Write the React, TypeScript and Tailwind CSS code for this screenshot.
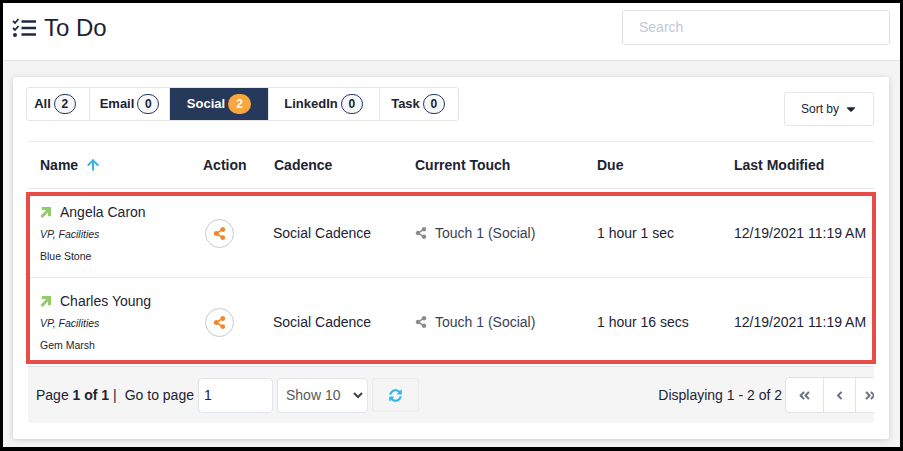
import { FaShareAlt, FaSyncAlt, FaAngleDoubleLeft, FaAngleDoubleRight, FaAngleLeft, FaCaretDown } from "react-icons/fa";
import { FiArrowUp } from "react-icons/fi";

const tabs = [
  { label: "All", count: 2 },
  { label: "Email", count: 0 },
  { label: "Social", count: 2, active: true },
  { label: "LinkedIn", count: 0 },
  { label: "Task", count: 0 },
];

const tabWidths: Record<string, string> = {
  All: "w-[63px] pr-[6px]",
  Email: "w-[80px]",
  Social: "w-[99px]",
  LinkedIn: "w-[111px] pr-[1px]",
  Task: "w-[78px] pr-[2px]",
};

const rows = [
  { name: "Angela Caron", company: "Blue Stone", due: "1 hour 1 sec" },
  { name: "Charles Young", company: "Gem Marsh", due: "1 hour 16 secs" },
];

const columns = "grid grid-cols-[175px_71px_141px_182px_137px_1fr]";

function TodoIcon() {
  return (
    <svg width="24" height="20" viewBox="0 0 24 20" className="text-[#1c2a45]">
      <path d="M1 3l2 2 3.5-4M1 10l2 2 3.5-4" fill="none" stroke="currentColor" strokeWidth="1.8" />
      <circle cx="3" cy="17" r="2" fill="currentColor" />
      <path d="M9.500 3.500h14.500M9.500 10h14.500M9.500 16.500h14.500" stroke="currentColor" strokeWidth="2.400" />
    </svg>
  );
}

function TrendArrow() {
  return (
    <svg width="11" height="11" viewBox="0 0 11 11" className="shrink-0">
      <path d="M1.500 10L8.500 2.800M1.800 1.500h7.700v7.700" fill="none" stroke="#93cc70" strokeWidth="3" />
    </svg>
  );
}

export default function App() {
  return (
    <div className="h-[451px] w-[903px] overflow-hidden border-t-[3px] border-r-[3px] border-b-[4px] border-l-[3px] border-black bg-[#f4f4f4] font-['Liberation_Sans',Arial,sans-serif] text-[14px] text-[#1c2333]">
      <header className="flex h-[58px] items-center justify-between border-b border-[#e3e3e3] bg-white pr-[10px] pl-[9px]">
        <div className="-mt-[8px] flex items-center gap-[8px]">
          <TodoIcon />
          <h1 className="text-[24px] leading-none font-normal">To Do</h1>
        </div>
        <div className="-mt-[8px] flex h-[35px] w-[268px] items-center rounded-[3px] border border-[#e2e2e2] px-[16px] text-[14px] text-[#c3c8d6]">
          Search
        </div>
      </header>

      <main className="mx-[10px] mt-[16px] h-[362px] w-[876px] rounded-[3px] bg-white pt-[10px] pl-[13px] shadow-[0_1px_6px_rgba(0,0,0,0.16)]">
        <div className="flex items-start justify-between pr-[15px]">
          <div className="flex h-[34px] rounded-[3px] border border-[#e6e6e6]">
            {tabs.map((t) => (
              <div
                key={t.label}
                className={`flex items-center justify-center gap-[3px] border-r border-[#e6e6e6] text-[13px] font-bold last:border-r-0 ${tabWidths[t.label]} ${t.active ? "bg-[#27395a] text-white" : ""}`}
              >
                <span>{t.label}</span>
                <span
                  className={`flex h-[20px] items-center justify-center rounded-full text-[12px] ${t.active ? "w-[23px] bg-[#f9a63f] text-white" : "w-[22px] border border-[#27395a] bg-[#f6f7fa]"}`}
                >
                  {t.count}
                </span>
              </div>
            ))}
          </div>
          <div className="mt-[5px] flex h-[34px] w-[90px] items-center justify-center gap-[5px] rounded-[3px] border border-[#e6e6e6] pl-[1px] text-[12px]">
            Sort by
            <FaCaretDown className="text-[14px]" />
          </div>
        </div>

        <div className="mt-[15px] mr-[15px] ml-[2px] border-t border-[#ececec]">
          <div className={`${columns} h-[47px] items-center border-b border-[#e6e6e6] font-bold`}>
            <div className="flex items-center gap-[7px] pl-[12px]">
              Name
              <FiArrowUp className="text-[16px] text-[#35b5e6]" strokeWidth={3} />
            </div>
            <div>Action</div>
            <div>Cadence</div>
            <div>Current Touch</div>
            <div>Due</div>
            <div>Last Modified</div>
          </div>

          <div className="relative">
            {rows.map((r, i) => (
              <div
                key={r.name}
                className={`${columns} items-center ${i === 0 ? "h-[89px] border-b border-[#ececec]" : "h-[88px]"}`}
              >
                <div className="pt-[2px] pl-[12px]">
                  <div className="flex h-[22px] items-center gap-[9px]">
                    <TrendArrow />
                    <span>{r.name}</span>
                  </div>
                  <div className="h-[22px] text-[10.500px] leading-[22px] italic">VP, Facilities</div>
                  <div className="h-[22px] text-[10.500px] leading-[22px]">{r.company}</div>
                </div>
                <div>
                  <div className="ml-[2px] flex h-[29px] w-[29px] items-center justify-center rounded-full border border-[#c9c9c9]">
                    <FaShareAlt className="text-[13px] text-[#f5852b]" />
                  </div>
                </div>
                <div className="-ml-px">Social Cadence</div>
                <div className="flex items-center gap-[8px] text-[#3a4152]">
                  <FaShareAlt className="text-[12px] text-[#8a8a8a]" />
                  Touch 1 (Social)
                </div>
                <div>{r.due}</div>
                <div className="whitespace-nowrap">12/19/2021 11:19 AM</div>
              </div>
            ))}
            {/* red highlight drawn over the rows */}
            <div className="absolute top-[3px] -left-[2px] h-[172px] w-[850px] border-[4px] border-[#e84c47]" />
          </div>

          <footer className="flex h-[57px] items-center justify-between overflow-hidden rounded-b-[3px] border-t border-[#dfdfdf] bg-[#f5f5f5] pl-[8px]">
            <div className="flex items-center">
              <span>Page <b>1 of 1</b> |</span>
              <span className="ml-[8px]">Go to page</span>
              <div className="ml-[4px] flex h-[35px] w-[75px] items-center rounded-[4px] border border-[#dfe5ea] bg-white pl-[5px]">1</div>
              <div className="ml-[4px] flex h-[35px] w-[91px] items-center justify-between rounded-[4px] border border-[#dfe5ea] bg-white pr-[4px] pl-[8px] text-[#55585f]">
                Show 10
                <svg width="10" height="7" viewBox="0 0 10 7">
                  <path d="M1 1l4 4 4-4" fill="none" stroke="#444" strokeWidth="2" />
                </svg>
              </div>
              <div className="ml-[4px] flex h-[34px] w-[47px] items-center justify-center rounded-[3px] border border-[#ebebeb]">
                <FaSyncAlt className="text-[13px] text-[#35b5e6]" />
              </div>
            </div>
            <div className="flex items-center">
              <span className="mr-[3px]">Displaying 1 - 2 of 2</span>
              <div className="-mr-[11px] flex h-[36px] rounded-[4px] border border-[#e1e3e8] bg-white text-[#6f7683]">
                <div className="flex w-[38px] items-center justify-center border-r border-[#e1e3e8]"><FaAngleDoubleLeft className="text-[13px]" /></div>
                <div className="flex w-[32px] items-center justify-center border-r border-[#e1e3e8]"><FaAngleLeft className="text-[13px]" /></div>
                <div className="flex w-[28px] items-center justify-center"><FaAngleDoubleRight className="text-[13px]" /></div>
              </div>
            </div>
          </footer>
        </div>
      </main>
    </div>
  );
}
